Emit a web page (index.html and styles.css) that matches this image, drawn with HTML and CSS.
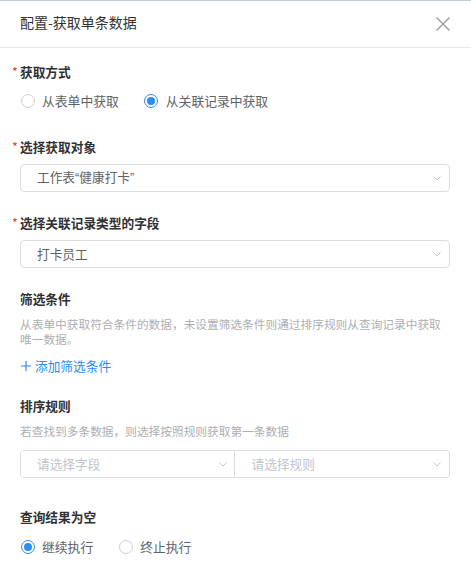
FILE: index.html
```html
<!DOCTYPE html>
<html lang="zh-CN">
<head>
<meta charset="utf-8">
<title>配置-获取单条数据</title>
<link rel="stylesheet" href="styles.css">
</head>
<body>
<div class="dialog">
  <div class="header">
    <div class="title">配置-获取单条数据</div>
    <svg class="close" width="14" height="14" viewBox="0 0 14 14"><path d="M0.5 0.5L13.5 13.5M13.5 0.5L0.5 13.5"/></svg>
  </div>
  <div class="form">
    <div class="label l1"><span class="req">*</span>获取方式</div>
    <div class="radios r1">
      <div class="radio"><span class="circle"></span><span class="rtext">从表单中获取</span></div>
      <div class="radio checked"><span class="circle"></span><span class="rtext">从关联记录中获取</span></div>
    </div>

    <div class="label l2"><span class="req">*</span>选择获取对象</div>
    <div class="select s1">
      <span class="value quoted">工作表“健康打卡”</span>
      <svg class="chev" width="8" height="5" viewBox="0 0 8 5"><path d="M0.5 0.5L4 4L7.5 0.5"/></svg>
    </div>

    <div class="label l3"><span class="req">*</span>选择关联记录类型的字段</div>
    <div class="select s2">
      <span class="value">打卡员工</span>
      <svg class="chev" width="8" height="5" viewBox="0 0 8 5"><path d="M0.5 0.5L4 4L7.5 0.5"/></svg>
    </div>

    <div class="label l4">筛选条件</div>
    <div class="desc d1">从表单中获取符合条件的数据，未设置筛选条件则通过排序规则从查询记录中获取唯一数据。</div>
    <div class="add"><svg class="plus" width="10" height="10" viewBox="0 0 10 10"><path d="M5 0V10M0 5H10"/></svg><span>添加筛选条件</span></div>

    <div class="label l5">排序规则</div>
    <div class="desc d2">若查找到多条数据，则选择按照规则获取第一条数据</div>
    <div class="pair">
      <div class="select half left">
        <span class="placeholder">请选择字段</span>
        <svg class="chev" width="8" height="5" viewBox="0 0 8 5"><path d="M0.5 0.5L4 4L7.5 0.5"/></svg>
      </div>
      <div class="select half right">
        <span class="placeholder">请选择规则</span>
        <svg class="chev" width="8" height="5" viewBox="0 0 8 5"><path d="M0.5 0.5L4 4L7.5 0.5"/></svg>
      </div>
    </div>

    <div class="label l6">查询结果为空</div>
    <div class="radios r2">
      <div class="radio checked"><span class="circle"></span><span class="rtext">继续执行</span></div>
      <div class="radio"><span class="circle"></span><span class="rtext">终止执行</span></div>
    </div>
  </div>
</div>
</body>
</html>
```

FILE: styles.css
```css
html, body {
  margin: 0;
  padding: 0;
  background: #ffffff;
}

body {
  font-family: "Noto Sans CJK SC", "Noto Sans", sans-serif;
  color: #333333;
}

.dialog {
  width: 471px;
  border-top: 1px solid #c3ceda;
}

.header {
  height: 47px;
  box-sizing: border-box;
  display: flex;
  align-items: center;
  justify-content: space-between;
  padding: 0 21px 0 20px;
  border-bottom: 1px solid #e6e8eb;
}

.title {
  font-size: 14px;
  line-height: 20px;
  color: #333333;
  padding-bottom: 5px;
}

.close {
  display: block;
}

.close path {
  stroke: #9a9a9a;
  stroke-width: 1.4;
  fill: none;
}

.form {
  padding: 14px 21px 0 20px;
}

.label {
  font-size: 12.7px;
  line-height: 20px;
  font-weight: 700;
  color: #2f3033;
}

.req {
  display: inline-block;
  width: 8px;
  margin-left: -8px;
  color: #ee3322;
  font-weight: 400;
}

.radios {
  display: flex;
  align-items: center;
  height: 20px;
}

.radio {
  display: flex;
  align-items: center;
  margin-right: 25px;
}

.circle {
  width: 14px;
  height: 14px;
  box-sizing: border-box;
  border: 1px solid #cfcfcf;
  border-radius: 50%;
  margin-left: 0.5px;
  margin-right: 7.5px;
  display: flex;
  align-items: center;
  justify-content: center;
}

.radio.checked .circle {
  border-color: #2d8cf0;
}

.radio.checked .circle::after {
  content: "";
  width: 8px;
  height: 8px;
  border-radius: 50%;
  background: #2d8cf0;
}

.rtext {
  font-size: 12.8px;
  line-height: 20px;
  color: #606266;
}

.r1 { margin-top: 9px; }
.l2 { margin-top: 26px; }
.l3 { margin-top: 21px; }
.l4 { margin-top: 21px; }
.l5 { margin-top: 20px; }
.l6 { margin-top: 29px; }
.r2 { margin-top: 10px; }

.select {
  height: 28px;
  box-sizing: border-box;
  border: 1px solid #dcdee2;
  border-radius: 4px;
  display: flex;
  align-items: center;
  justify-content: space-between;
  padding: 0 8px 0 16px;
}

.s1, .s2 { margin-top: 7px; }

.value {
  font-size: 12.7px;
  line-height: 20px;
  color: #5f6166;
}

.quoted {
  font-family: "Liberation Sans", "Noto Sans CJK SC", sans-serif;
}

.placeholder {
  font-size: 12.7px;
  line-height: 20px;
  color: #c0c4cc;
}

.chev {
  display: block;
}

.chev path {
  stroke: #c3c7cf;
  stroke-width: 1;
  fill: none;
}

.desc {
  font-size: 11.7px;
  line-height: 15.5px;
  color: #acaeb3;
}

.d1 { margin-top: 6.5px; }
.d2 { margin-top: 7px; }

.add {
  margin-top: 9px;
  display: flex;
  align-items: center;
  font-size: 12.7px;
  line-height: 20px;
  color: #2d8cf0;
}

.plus {
  display: block;
  margin-left: 0.5px;
  margin-right: 4.5px;
}

.plus path {
  stroke: #2d8cf0;
  stroke-width: 1.2;
  fill: none;
}

.pair {
  margin-top: 12px;
  display: flex;
}

.half {
  flex: 1;
}

.half.left {
  border-radius: 4px 0 0 4px;
  padding-right: 7px;
}

.half.right {
  border-left: none;
  border-radius: 0 4px 4px 0;
  padding-left: 17px;
}
```
